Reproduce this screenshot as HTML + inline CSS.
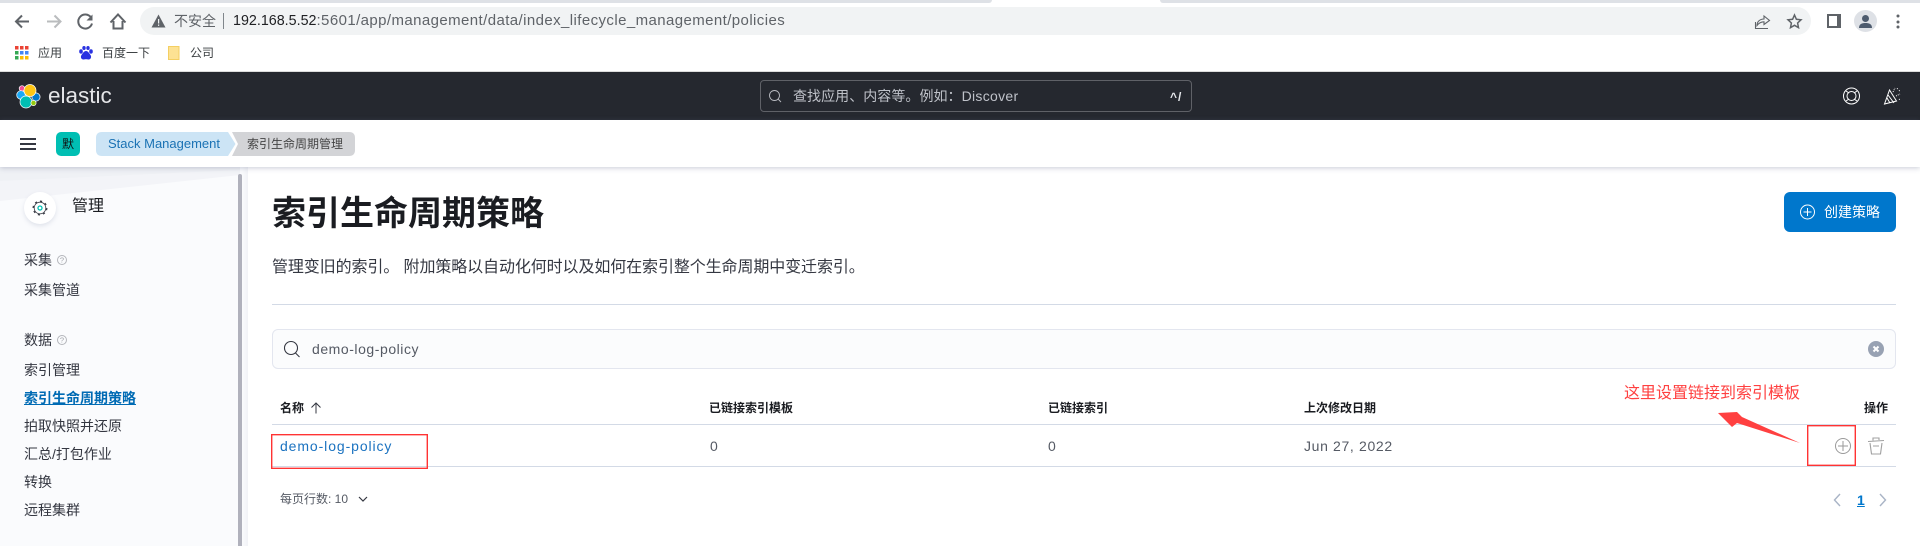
<!DOCTYPE html>
<html lang="zh"><head><meta charset="utf-8"><title>索引生命周期策略</title>
<style>
html,body{margin:0;padding:0;width:1920px;height:546px;overflow:hidden;background:#fff}
body{position:relative;font-family:"Liberation Sans","Noto Sans CJK SC",sans-serif;color:#343741}
.a{position:absolute;white-space:nowrap}
.t{position:absolute;white-space:nowrap;line-height:20px;height:20px}
svg{position:absolute;overflow:visible}
</style></head><body>
<!-- chrome -->
<div class="a" style="left:0;top:0;width:992px;height:3px;background:#dee1e6;border-radius:0 0 5px 0"></div>
<div class="a" style="left:1160px;top:0;width:760px;height:3px;background:#dee1e6;border-radius:0 0 0 5px"></div>
<div class="a" style="left:140px;top:7px;width:1671px;height:28px;background:#f1f3f4;border-radius:14px"></div>
<svg style="left:0;top:0" width="140" height="40" fill="none" stroke-width="2">
<path d="M29 21.500H16.500M22 15.500l-6 6 6 6" stroke="#5f6368"/>
<path d="M47 21.500h13M54.500 15.500l6 6-6 6" stroke="#babcbe"/>
<path d="M91 17.500a7 7 0 1 0 1 6" stroke="#5f6368"/><path d="M92.500 14.500v6h-6z" fill="#5f6368"/>
<path d="M110.500 22.500l7.500-8 7.500 8M113.500 21v7.500h9V21" stroke="#5f6368" stroke-width="2"/>
</svg>
<svg style="left:151px;top:14px" width="15" height="14"><path d="M7.500 0.500L14.500 13.500H0.500Z" fill="#5f6368"/><path d="M7 5h1.200v4.500H7zM7 10.500h1.200v1.400H7z" fill="#f1f3f4"/></svg>
<div class="t" style="left:174px;top:11px;font-size:14px;color:#5f6368">不安全</div>
<div class="a" style="left:223px;top:13px;width:1px;height:16px;background:#80868b"></div>
<div class="t" style="left:233px;top:11px;font-size:15px;color:#5f6368;letter-spacing:.41px"><span style="color:#202124;font-size:14.300px;letter-spacing:0">192.168.5.52</span>:5601/app/management/data/index_lifecycle_management/policies</div>
<svg style="left:1755px;top:14px" width="50" height="16" fill="none" stroke="#5f6368" stroke-width="1.100">
<path d="M.5 8v6.500H13M2 11.500C2 7.500 5 5 9 5V2l5.500 4.500L9 10.500V7.800c-3 0-5 1-7 3.700z"/>
<path d="M39.500 1l1.900 4.300 4.600.5-3.400 3.200.9 4.600-4-2.300-4 2.300.9-4.600-3.400-3.200 4.600-.5z" stroke-width="1.500"/>
</svg>
<div class="a" style="left:1827px;top:14px;width:8px;height:10px;background:#fff;border-style:solid;border-color:#5f6368;border-width:2px 4px 2px 2px"></div>
<div class="a" style="left:1854px;top:10px;width:23px;height:22px;border-radius:50%;background:#dee1e6"></div>
<svg style="left:1854px;top:10px" width="23" height="22" fill="#4d5b6e"><circle cx="11.500" cy="8.500" r="3.500"/><path d="M5 18c0-4 3-5 6.500-5s6.500 1 6.500 5z"/></svg>
<svg style="left:1895px;top:14px" width="6" height="16" fill="#5f6368"><circle cx="3" cy="2" r="1.500"/><circle cx="3" cy="8" r="1.500"/><circle cx="3" cy="13" r="1.500"/></svg>
<!-- bookmarks -->
<svg style="left:15px;top:46px" width="14" height="14">
<rect width="3.500" height="3.500" fill="#ea4335"/><rect x="5" width="3.500" height="3.500" fill="#ea4335"/><rect x="10" width="3.500" height="3.500" fill="#ea4335"/>
<rect y="5" width="3.500" height="3.500" fill="#34a853"/><rect x="5" y="5" width="3.500" height="3.500" fill="#4285f4"/><rect x="10" y="5" width="3.500" height="3.500" fill="#4285f4"/>
<rect y="10" width="3.500" height="3.500" fill="#34a853"/><rect x="5" y="10" width="3.500" height="3.500" fill="#fbbc04"/><rect x="10" y="10" width="3.500" height="3.500" fill="#fbbc04"/></svg>
<div class="t" style="left:38px;top:43px;font-size:12px;color:#3c4043">应用</div>
<svg style="left:79px;top:46px" width="14" height="14" fill="#2932e1"><ellipse cx="2" cy="5.500" rx="1.800" ry="2.200"/><ellipse cx="5" cy="2" rx="1.700" ry="2"/><ellipse cx="9" cy="2" rx="1.700" ry="2"/><ellipse cx="12" cy="5.500" rx="1.800" ry="2.200"/><path d="M7 5c-2 0-3 2-4.500 4C1 11 2.500 14 5 13.500c1.300-.3 2.700-.3 4 0 2.500.5 4-2.500 2.500-4.500C10 7 9 5 7 5z"/></svg>
<div class="t" style="left:102px;top:43px;font-size:12px;color:#3c4043">百度一下</div>
<svg style="left:168px;top:46px" width="12" height="14"><path d="M.5.500h10.500v13H.500z" fill="#fde293" stroke="#f4cf62"/></svg>
<div class="t" style="left:190px;top:43px;font-size:12px;color:#3c4043">公司</div>
<!-- header -->
<div class="a" style="left:0;top:71px;width:1920px;height:1px;background:#dcdcdc"></div>
<div class="a" style="left:0;top:72px;width:1920px;height:48px;background:#25282f"></div>
<svg style="left:16px;top:84px" width="24" height="24" stroke="#fff" stroke-width=".7">
<circle cx="6" cy="4.500" r="2.800" fill="#f04e98"/><circle cx="5" cy="11" r="4.300" fill="#1ba9f5"/><circle cx="20" cy="13" r="4.100" fill="#0077cc"/><circle cx="14" cy="6.500" r="6" fill="#fec514"/><circle cx="10" cy="18" r="6" fill="#00bfb3"/><circle cx="17.500" cy="19" r="2.600" fill="#93c90e"/></svg>
<div class="a" style="left:48px;top:82px;font-size:22.500px;line-height:28px;color:#e4e5e8">elastic</div>
<div class="a" style="left:760px;top:80px;width:430px;height:30px;border:1px solid #5f6167;border-radius:4px"></div>
<svg style="left:769px;top:90px" width="13" height="13" fill="none" stroke="#b8bac0" stroke-width=".9"><circle cx="5.500" cy="5.500" r="5"/><path d="M9 9l3 3"/></svg>
<div class="t" style="left:793px;top:86px;font-size:14px;color:#bfc2c9;letter-spacing:.05px">查找应用、内容等。例如：<span style="letter-spacing:.3px">Discover</span></div>
<div class="t" style="left:1170px;top:87px;font-size:12px;font-weight:bold;color:#e6e8ec;letter-spacing:1px">^/</div>
<svg style="left:1843px;top:87px" width="18" height="18" fill="none" stroke="#fff" stroke-width="1"><circle cx="8.500" cy="9" r="8"/><circle cx="8.500" cy="9" r="4.500"/><path d="M3 4l3 2M14 4l-3 2M3 14l3-2M14 14l-3-2"/></svg>
<svg style="left:1884px;top:87px" width="17" height="18" fill="none" stroke="#fff" stroke-width="1"><path d="M.5 17L5.500 3 12.500 14zM4 8l6 8M3 11l3 5"/><path d="M9 5l2-4M12 9l4-2M13 2l1-1M15 12l1 1M15 4l1-1" stroke-dasharray="1 1"/></svg>
<!-- breadcrumb bar -->
<div class="a" style="left:0;top:120px;width:1920px;height:47px;background:#fff;box-shadow:0 1px 5px rgba(100,110,140,.35);z-index:3"></div>
<div style="position:absolute;left:0;top:0;z-index:4">
<div class="a" style="left:20px;top:138px;width:16px;height:2px;background:#343741"></div>
<div class="a" style="left:20px;top:143px;width:16px;height:2px;background:#343741"></div>
<div class="a" style="left:20px;top:148px;width:16px;height:2px;background:#343741"></div>
<div class="a" style="left:56px;top:132px;width:24px;height:24px;background:#00bfb3;border-radius:5px"></div>
<div class="t" style="left:62px;top:134px;font-size:12px;color:#111">默</div>
<svg style="left:96px;top:132px" width="260" height="24"><path d="M6 0H132L139.500 12 132 24H6Q0 24 0 18V6Q0 0 6 0Z" fill="#cce4f5"/><path d="M136 0H253Q259 0 259 6V18Q259 24 253 24H136L142 12Z" fill="#d3d4d7"/></svg>
<div class="t" style="left:108px;top:134px;font-size:13px;color:#1a72b4">Stack Management</div>
<div class="t" style="left:247px;top:134px;font-size:12px;color:#444">索引生命周期管理</div>
</div>
<!-- sidebar -->
<div class="a" style="left:0;top:167px;width:248px;height:379px;background:#fafbfd"></div>
<svg style="left:0;top:167px" width="240" height="40"><path d="M0 0H240V8L0 34Z" fill="#f3f4f8"/><path d="M0 0H240V3L0 14Z" fill="#eff1f5"/></svg>
<div class="a" style="left:238px;top:174px;width:4px;height:372px;background:#b0b1bc;border-radius:2px 2px 0 0"></div>
<div class="a" style="left:242px;top:167px;width:6px;height:379px;background:linear-gradient(90deg,#fafbfd,#f1f2f6)"></div>
<div class="a" style="left:24px;top:192px;width:32px;height:32px;background:#fff;border-radius:50%;box-shadow:0 2px 5px rgba(120,130,160,.2)"></div>
<svg style="left:32px;top:200px" width="16" height="16" fill="none"><circle cx="8" cy="8" r="5.800" stroke="#343741" stroke-width=".8"/><circle cx="8" cy="8" r="6.800" stroke="#343741" stroke-dasharray="2.200 3.100" stroke-width="1.300"/><circle cx="8" cy="8" r="2" stroke="#00bfb3" stroke-width="1.300"/></svg>
<div class="t" style="left:72px;top:197px;font-size:16px;color:#1a1c21">管理</div>
<div class="t" style="left:24px;top:250px;font-size:14px;color:#343741">采集</div>
<svg style="left:57px;top:255px" width="10" height="10" fill="none"><circle cx="5" cy="5" r="4.500" stroke="#b4b6bb"/><text x="5" y="7.700" font-size="7.500" text-anchor="middle" fill="#a0a2a8" font-family="Liberation Sans">?</text></svg>
<div class="t" style="left:24px;top:280px;font-size:14px;color:#343741">采集管道</div>
<div class="t" style="left:24px;top:330px;font-size:14px;color:#343741">数据</div>
<svg style="left:57px;top:335px" width="10" height="10" fill="none"><circle cx="5" cy="5" r="4.500" stroke="#b4b6bb"/><text x="5" y="7.700" font-size="7.500" text-anchor="middle" fill="#a0a2a8" font-family="Liberation Sans">?</text></svg>
<div class="t" style="left:24px;top:360px;font-size:14px;color:#343741">索引管理</div>
<div class="t" style="left:24px;top:388px;font-size:14px;font-weight:bold;color:#006bb4;text-decoration:underline">索引生命周期策略</div>
<div class="t" style="left:24px;top:416px;font-size:14px;color:#343741">拍取快照并还原</div>
<div class="t" style="left:24px;top:444px;font-size:14px;color:#343741">汇总/打包作业</div>
<div class="t" style="left:24px;top:472px;font-size:14px;color:#343741">转换</div>
<div class="t" style="left:24px;top:500px;font-size:14px;color:#343741">远程集群</div>
<!-- main -->
<div class="a" style="left:272px;top:190px;font-size:34px;line-height:48px;font-weight:bold;color:#1a1c21">索引生命周期策略</div>
<div class="t" style="left:272px;top:258px;font-size:16px;color:#343741;letter-spacing:-.1px">管理变旧的索引。 附加策略以自动化何时以及如何在索引整个生命周期中变迁索引。</div>
<div class="a" style="left:272px;top:304px;width:1624px;height:1px;background:#d3dae6"></div>
<div class="a" style="left:1784px;top:192px;width:112px;height:40px;background:#0077cc;border-radius:6px"></div>
<svg style="left:1800px;top:204px" width="16" height="16" fill="none" stroke="#fff"><circle cx="7.500" cy="8" r="7"/><path d="M7.500 4v8M3.500 8h8"/></svg>
<div class="t" style="left:1824px;top:202px;font-size:14px;color:#fff">创建策略</div>
<div class="a" style="left:272px;top:329px;width:1622px;height:38px;background:#fbfcfd;border:1px solid #e3e6ef;border-radius:6px"></div>
<svg style="left:284px;top:341px" width="17" height="17" fill="none" stroke="#343741" stroke-width="1.100"><circle cx="7" cy="7" r="6.500"/><path d="M11.500 12l4 4"/></svg>
<div class="t" style="left:312px;top:339px;font-size:14px;color:#555a64;letter-spacing:.55px">demo-log-policy</div>
<div class="a" style="left:1868px;top:341px;width:16px;height:16px;background:#98a2b3;border-radius:50%"></div>
<svg style="left:1868px;top:341px" width="16" height="16" stroke="#fff" stroke-width="2"><path d="M5.500 5.500l5 5M10.500 5.500l-5 5"/></svg>
<!-- table -->
<div class="t" style="left:280px;top:398px;font-size:12px;font-weight:bold;color:#1a1c21">名称</div>
<svg style="left:310px;top:402px" width="12" height="12" fill="none" stroke="#343741"><path d="M6 11.500V1M1.500 5.500L6 1l4.500 4.500"/></svg>
<div class="t" style="left:709px;top:398px;font-size:12px;font-weight:bold;color:#1a1c21">已链接索引模板</div>
<div class="t" style="left:1048px;top:398px;font-size:12px;font-weight:bold;color:#1a1c21">已链接索引</div>
<div class="t" style="left:1304px;top:398px;font-size:12px;font-weight:bold;color:#1a1c21">上次修改日期</div>
<div class="t" style="left:1864px;top:398px;font-size:12px;font-weight:bold;color:#1a1c21">操作</div>
<div class="a" style="left:272px;top:424px;width:1624px;height:1px;background:#d3dae6"></div>
<div class="a" style="left:272px;top:466px;width:1624px;height:1px;background:#d3dae6"></div>
<div class="t" style="left:280px;top:436px;font-size:14px;color:#1a72c0;letter-spacing:.9px">demo-log-policy</div>
<div class="t" style="left:710px;top:436px;font-size:14px;color:#555a64">0</div>
<div class="t" style="left:1048px;top:436px;font-size:14px;color:#555a64">0</div>
<div class="t" style="left:1304px;top:436px;font-size:14px;color:#555a64;letter-spacing:.65px">Jun 27, 2022</div>
<svg style="left:1835px;top:438px" width="16" height="16" fill="none" stroke="#9a9a9a" stroke-width="1"><circle cx="8" cy="8" r="7.500"/><path d="M8 3v10M3 8h10"/></svg>
<svg style="left:1867px;top:437px" width="18" height="18" fill="none" stroke="#a0a0a0" stroke-width="1.100"><path d="M1 4.500l16-1M6 3.500V1h6v2M3 6l1.500 11h9L15 6M6 9h6"/></svg>
<div class="t" style="left:280px;top:489px;font-size:12px;color:#555a64">每页行数: 10</div>
<svg style="left:358px;top:496px" width="10" height="7" fill="none" stroke="#343741" stroke-width="1.200"><path d="M1 1l4 4 4-4"/></svg>
<svg style="left:1833px;top:493px" width="56" height="14" fill="none" stroke="#a9b4c6" stroke-width="1.400"><path d="M7 1L1.500 7 7 13M47 1l5.500 6-5.500 6"/></svg>
<div class="t" style="left:1857px;top:490px;font-size:14px;font-weight:bold;color:#0077cc;text-decoration:underline">1</div>
<!-- annotations -->
<div class="a" style="left:271px;top:434px;width:155px;height:33px;border:1px solid #f33;box-shadow:inset 0 0 0 .4px #f33"></div>
<div class="a" style="left:1807px;top:425px;width:47px;height:39px;border:1px solid #f33;box-shadow:inset 0 0 0 .4px #f33"></div>
<div class="t" style="left:1624px;top:384px;font-size:16px;color:#ff4040">这里设置链接到索引模板</div>
<svg style="left:0;top:0" width="1920" height="546"><path d="M1718 413L1737 412 1742 417 1800 443 1737 423 1732 427Z" fill="#ff4040"/></svg>
</body></html>
